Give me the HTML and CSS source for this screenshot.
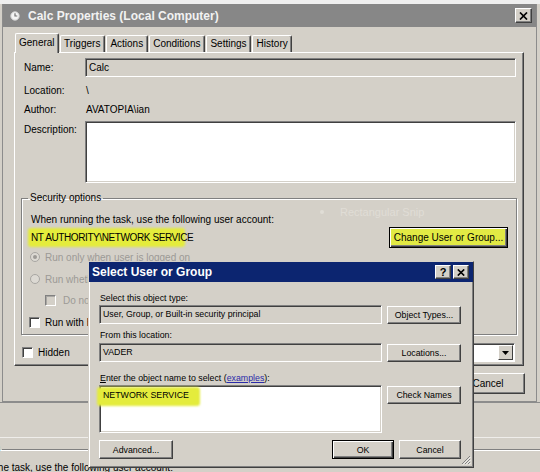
FILE: index.html
```html
<!DOCTYPE html>
<html lang="en">
<head>
    <meta charset="UTF-8">
    <meta name="viewport" content="width=device-width, initial-scale=1.0">
    <title>Calc Properties (Local Computer)</title>
    <link rel="stylesheet" href="styles.css">
</head>
<body>
<div class="desktop">
    <div class="props">
        <div class="titlebar">
            <svg class="titlebar__icon" width="10" height="10" viewBox="0 0 10 10">
                <circle cx="5" cy="5" r="4.2" fill="#f4f4f4" stroke="#d0d0d0" stroke-width="1"/>
                <path d="M5 2.3V5h2.3" fill="none" stroke="#707070" stroke-width="1.2"/>
            </svg>
            <span class="titlebar__text">Calc Properties (Local Computer)</span>
            <span class="cap-btn cap-btn--close">
                <svg width="9" height="8" viewBox="0 0 9 8"><path d="M1 0.5l7 7M8 0.5l-7 7" stroke="#000" stroke-width="1.7"/></svg>
            </span>
        </div>
        <div class="props__body">
            <div class="tabs">
                <span class="tab tab--active">General</span>
                <span class="tab">Triggers</span>
                <span class="tab">Actions</span>
                <span class="tab">Conditions</span>
                <span class="tab">Settings</span>
                <span class="tab">History</span>
            </div>
            <div class="panel">
                <div class="row">
                    <span class="row__label">Name:</span>
                    <div class="textbox textbox--readonly">Calc</div>
                </div>
                <div class="row row--text">
                    <span class="row__label">Location:</span>
                    <span class="row__value">\</span>
                </div>
                <div class="row row--text row--author">
                    <span class="row__label">Author:</span>
                    <span class="row__value">AVATOPIA\ian</span>
                </div>
                <div class="row row--desc">
                    <span class="row__label">Description:</span>
                    <div class="textbox textbox--multi"></div>
                </div>
                <fieldset class="group">
                    <legend>Security options</legend>
                    <div class="group__line">When running the task, use the following user account:</div>
                    <div class="group__account">
                        <span class="marked marked--account">NT AUTHORITY\NETWORK SERVICE</span>
                        <button class="btn btn--default btn--change">Change User or Group...</button>
                    </div>
                    <div class="opt opt--disabled opt--r1"><span class="radio radio--on"></span>Run only when user is logged on</div>
                    <div class="opt opt--disabled opt--r2"><span class="radio"></span>Run whether user is logged on or not</div>
                    <div class="opt opt--disabled opt--r3"><span class="check check--disabled"></span>Do not store password</div>
                    <div class="opt opt--r4"><span class="check"></span>Run with highest privileges</div>
                </fieldset>
                <div class="panel__foot">
                    <div class="opt"><span class="check"></span>Hidden</div>
                    <div class="configure">
                        <span>Configure for:</span>
                        <div class="combo">
                            <span class="combo__text">Windows 7</span>
                            <span class="combo__arrow">
                                <svg width="7" height="4" viewBox="0 0 7 4"><path d="M0 0h7L3.5 4z" fill="#000"/></svg>
                            </span>
                        </div>
                    </div>
                </div>
            </div>
            <div class="props__buttons">
                <button class="btn btn--wide">OK</button>
                <button class="btn btn--wide">Cancel</button>
            </div>
        </div>
    </div>

    <div class="behind">
        <fieldset class="group group--behind">
            <legend>Security options</legend>
            <div class="group__line">When running the task, use the following user account:</div>
        </fieldset>
    </div>

    <span class="ghost"><span class="ghost__dot"></span>Rectangular Snip</span>

    <div class="picker">
        <div class="picker__title">
            <span class="picker__caption">Select User or Group</span>
            <span class="cap-btn cap-btn--small cap-btn--help">?</span>
            <span class="cap-btn cap-btn--small">
                <svg width="8" height="7" viewBox="0 0 8 7"><path d="M0.8 0.4l6.4 6.2M7.2 0.4l-6.4 6.2" stroke="#000" stroke-width="1.6"/></svg>
            </span>
        </div>
        <div class="picker__content">
            <span class="picker__label picker__label--first">Select this object type:</span>
            <div class="textbox textbox--readonly textbox--small">User, Group, or Built-in security principal</div>
            <button class="btn btn--small">Object Types...</button>

            <span class="picker__label">From this location:</span>
            <div class="textbox textbox--readonly textbox--small textbox--loc">VADER</div>
            <button class="btn btn--small btn--loc">Locations...</button>

            <span class="picker__label picker__label--names"><u>E</u>nter the object name to select (<a class="link" href="#">examples</a>):</span>
            <div class="textbox textbox--names"><span class="marked marked--names">NETWORK SERVICE</span><span class="caret"></span></div>
            <button class="btn btn--small btn--check">Check Names</button>

            <div class="picker__foot">
                <button class="btn btn--small btn--adv">Advanced...</button>
                <button class="btn btn--small btn--default btn--ok">OK</button>
                <button class="btn btn--small btn--cancel">Cancel</button>
            </div>
        </div>
        <svg class="grip" width="10" height="10" viewBox="0 0 10 10">
            <path d="M9 1L1 9M9 4L4 9M9 7L7 9" stroke="#808080" stroke-width="1"/>
            <path d="M9.8 1.8L1.8 9.8M9.8 4.8L4.8 9.8M9.8 7.8L7.8 9.8" stroke="#fff" stroke-width="0.8"/>
        </svg>
    </div>
</div>
</body>
</html>
```

FILE: styles.css
```css
*{
    box-sizing: border-box;
}
html, body{
    margin: 0;
}
body{
    width: 540px;
    height: 472px;
    overflow: hidden;
    background-color: #d4d0c8;
    font-family: "Liberation Sans", Arial, sans-serif;
    font-size: 10px;
    color: #000;
}
.desktop{
    position: relative;
    width: 540px;
    height: 472px;
    overflow: hidden;
    padding-top: 4px;
    background: linear-gradient(#efefef 4px, #d4d0c8 4px);
}

/* main properties window */
.props{
    width: 535px;
    height: 398px;
    margin-left: 2px;
    border: 1px solid #8c8c8c;
    border-top: none;
    background-color: #d4d0c8;
}
.titlebar{
    display: flex;
    align-items: center;
    height: 23px;
    padding: 0 4px 0 7px;
    background-color: #878787;
}
.titlebar__icon{
    margin-right: 8px;
}
.titlebar__text{
    flex: 1;
    color: #f2f2f2;
    font-size: 12px;
    font-weight: bold;
}
.cap-btn{
    display: flex;
    align-items: center;
    justify-content: center;
    width: 17px;
    height: 15px;
    background-color: #d4d0c8;
    border: 1px solid;
    border-color: #fff #404040 #404040 #fff;
    box-shadow: inset -1px -1px #808080;
}
.cap-btn--small{
    width: 16px;
    height: 14px;
    margin-left: 2px;
}
.cap-btn--help{
    font-size: 11px;
    font-weight: bold;
    line-height: 12px;
}
.props__body{
    padding: 6px 12px 0 11px;
}

/* tabs */
.tabs{
    display: flex;
    align-items: flex-end;
    height: 19px;
    padding-left: 1px;
}
.tab{
    height: 17px;
    padding: 0 3.5px;
    margin-left: 1px;
    line-height: 15px;
    border: 1px solid;
    border-bottom: none;
    border-color: #fff #404040 #404040 #fff;
    border-radius: 2px 2px 0 0;
    box-shadow: inset -1px 0 #808080;
}
.tab--active{
    position: relative;
    z-index: 1;
    height: 20px;
    margin: 0 0 -1px 0;
    padding: 0 3px;
    line-height: 17px;
    background-color: #d4d0c8;
}
.panel{
    height: 314px;
    padding: 5px 6px 0 6px;
    border: 1px solid;
    border-color: #fff #404040 #404040 #fff;
    box-shadow: inset -1px -1px #808080;
}

/* label + value rows */
.row{
    display: grid;
    grid-template-columns: 61px 1fr;
    align-items: center;
    padding-left: 3px;
    margin-right: 1px;
}
.row--text{
    height: 16px;
    margin-top: 6px;
    line-height: 16px;
}
.row--author{
    margin-top: 3px;
}
.row--desc{
    align-items: start;
    margin-top: 3px;
}
.row--desc .row__label{
    padding-top: 3px;
    line-height: 12px;
}
.row__value{
    padding-left: 1px;
}
.textbox{
    height: 19px;
    padding: 0 3px;
    line-height: 17px;
    white-space: nowrap;
    overflow: hidden;
    background-color: #fff;
    border: 1px solid;
    border-color: #808080 #fff #fff #808080;
    box-shadow: inset 1px 1px #404040, inset -1px -1px #d4d0c8;
}
.textbox--readonly{
    background-color: #d4d0c8;
}
.textbox--multi{
    height: 62px;
}

/* security group */
.group{
    margin: 9px 0 0 0;
    padding: 9px 8px 5px 9px;
    min-width: 0;
    border: 1px solid #808080;
    box-shadow: inset 1px 1px #fff, 1px 1px #fff;
}
.group legend{
    margin-left: -3px;
    padding: 0 2px;
    line-height: 12px;
}
.group__line{
    line-height: 14px;
}
.group__account{
    display: flex;
    justify-content: space-between;
    align-items: center;
    height: 21px;
}
.marked{
    position: relative;
    z-index: 0;
}
.marked::before{
    content: "";
    position: absolute;
    z-index: -1;
    background-color: #e4ec3c;
    border-radius: 3px;
    filter: blur(0.8px);
}
.marked--account{
    letter-spacing: -0.4px;
}
.marked--account::before{
    left: -3px;
    right: 8px;
    top: -4px;
    bottom: -4px;
}
.marked--names::before{
    left: -6px;
    right: -11px;
    top: -3px;
    bottom: -6px;
}
.opt{
    display: flex;
    align-items: center;
    gap: 5px;
    height: 14px;
    white-space: nowrap;
}
.opt--disabled{
    color: #9c9a96;
}
.opt--r1{
    margin: 2px 0 0 -1px;
}
.opt--r2{
    margin: 8px 0 0 -1px;
}
.opt--r3{
    margin-top: 7px;
    padding-left: 14px;
    gap: 7px;
}
.opt--r4{
    margin: 8px 0 0 -2px;
}
.radio{
    position: relative;
    width: 10px;
    height: 10px;
    border-radius: 50%;
    border: 1px solid #a8a6a2;
    background-color: #dcd9d3;
}
.radio--on::after{
    content: "";
    position: absolute;
    left: 2px;
    top: 2px;
    width: 4px;
    height: 4px;
    border-radius: 50%;
    background-color: #9c9a96;
}
.check{
    width: 11px;
    height: 11px;
    background-color: #fff;
    border: 1px solid;
    border-color: #808080 #fff #fff #808080;
    box-shadow: inset 1px 1px #404040;
}
.check--disabled{
    background-color: #d4d0c8;
    box-shadow: inset 1px 1px #a8a6a2;
}
.panel__foot{
    display: flex;
    justify-content: space-between;
    align-items: center;
    height: 19px;
    margin: 8px 2px 0 1px;
}
.configure{
    display: flex;
    align-items: center;
    gap: 6px;
}
.combo{
    display: flex;
    justify-content: space-between;
    align-items: center;
    width: 200px;
    height: 19px;
    padding: 0 1px 0 3px;
    background-color: #fff;
    border: 1px solid;
    border-color: #808080 #fff #fff #808080;
    box-shadow: inset 1px 1px #404040;
}
.combo__arrow{
    display: flex;
    align-items: center;
    justify-content: center;
    width: 15px;
    height: 15px;
    background-color: #d4d0c8;
    border: 1px solid;
    border-color: #fff #404040 #404040 #fff;
}

/* buttons */
.btn{
    height: 21px;
    padding: 0;
    font: inherit;
    color: #000;
    background-color: #d4d0c8;
    border: 1px solid;
    border-color: #fff #404040 #404040 #fff;
    box-shadow: inset -1px -1px #808080;
}
.btn--default{
    border-color: #000;
    box-shadow: inset 1px 1px #fff, inset -1px -1px #404040, inset -2px -2px #808080;
}
.btn--change{
    width: 119px;
    background-color: #e2ea44;
}
.btn--wide{
    width: 74px;
}
.props__buttons{
    display: flex;
    justify-content: flex-end;
    gap: 6px;
    margin: 7px -1px 0 0;
}

/* the window behind, below the main one */
.behind{
    position: absolute;
    left: -80px;
    top: 402px;
    width: 620px;
    height: 70px;
    padding-top: 40px;
    border-top: 1px solid #8c8c8c;
}
.behind::before{
    content: "";
    position: absolute;
    left: 0;
    right: 0;
    top: 34px;
    border-top: 1px solid #efedea;
}
.group--behind{
    margin: 0;
    padding: 6px 8px 0 9px;
    border-bottom: none;
    border-right: none;
}
.group--behind legend{
    margin-left: -3px;
}

.ghost{
    position: absolute;
    left: 320px;
    top: 206px;
    display: flex;
    align-items: center;
    gap: 16px;
    font-size: 11px;
    color: #e0ddd6;
}
.ghost__dot{
    width: 4px;
    height: 4px;
    border-radius: 50%;
    background-color: #e0ddd6;
}

/* select user or group dialog */
.picker{
    position: absolute;
    z-index: 5;
    left: 88px;
    top: 261px;
    width: 386px;
    height: 207px;
    font-size: 8.8px;
    background-color: #d4d0c8;
    border: 1px solid;
    border-color: #d4d0c8 #404040 #404040 #d4d0c8;
    box-shadow: inset 1px 1px #fff, inset -1px -1px #808080;
}
.picker__title{
    display: flex;
    align-items: center;
    height: 20px;
    padding: 0 4px 0 3px;
    background-color: #0c2570;
}
.picker__caption{
    flex: 1;
    color: #fff;
    font-size: 12px;
    font-weight: bold;
}
.picker__content{
    display: grid;
    grid-template-columns: 283px 74px;
    column-gap: 5px;
    padding: 10px 11px 0 10px;
}
.picker__label{
    grid-column: 1 / 3;
    margin: 5px 0 2px 1px;
    line-height: 12px;
}
.picker__label--first{
    margin-top: 0;
    margin-bottom: 1px;
}
.picker__label--names{
    margin: 10px 0 1px 1px;
}
.link{
    color: #2b2ba8;
}
.textbox--small{
    line-height: 17px;
}
.textbox--names{
    height: 48px;
    padding-top: 1px;
    line-height: 16px;
    overflow: visible;
}
.caret{
    display: inline-block;
    width: 1px;
    height: 11px;
    margin-left: 1px;
    vertical-align: -2px;
    background-color: #000;
}
.btn--small{
    height: 18px;
    align-self: center;
}
.btn--check{
    align-self: start;
    margin-top: 1px;
}
.picker__foot{
    grid-column: 1 / 3;
    display: flex;
    gap: 5px;
    margin-top: 7px;
}
.picker__foot .btn{
    height: 19px;
}
.btn--adv{
    width: 74px;
}
.btn--ok{
    width: 62px;
    margin-left: auto;
}
.btn--cancel{
    width: 62px;
}
.grip{
    position: absolute;
    right: 2px;
    bottom: 2px;
}
```
